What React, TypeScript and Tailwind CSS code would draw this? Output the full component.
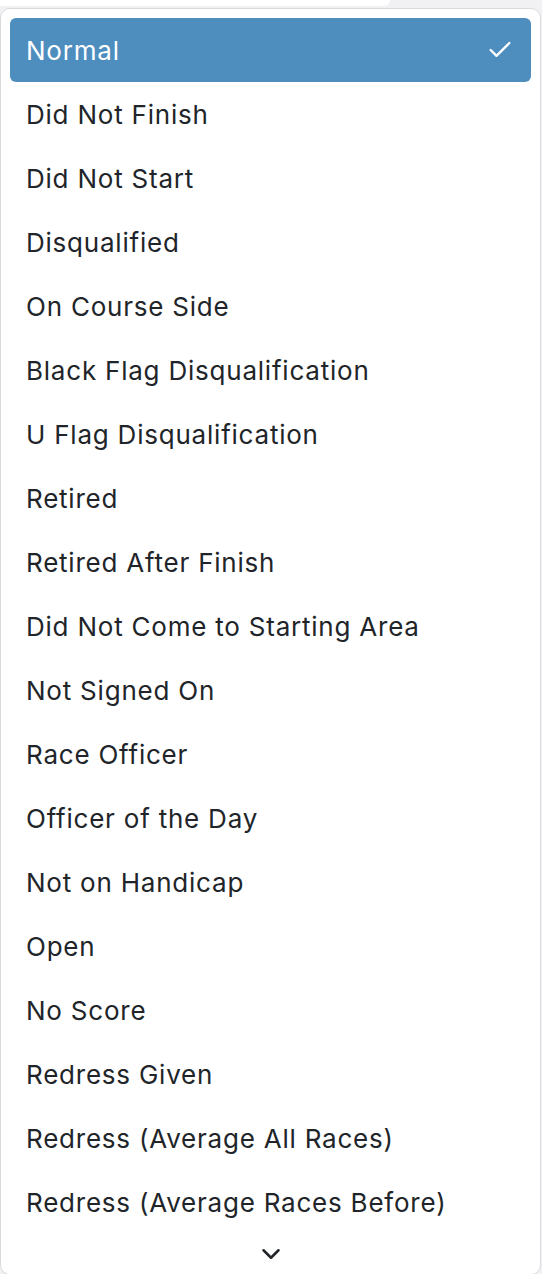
import React from "react";
import { Check, ChevronDown } from "lucide-react";

const OPTIONS = [
  "Normal",
  "Did Not Finish",
  "Did Not Start",
  "Disqualified",
  "On Course Side",
  "Black Flag Disqualification",
  "U Flag Disqualification",
  "Retired",
  "Retired After Finish",
  "Did Not Come to Starting Area",
  "Not Signed On",
  "Race Officer",
  "Officer of the Day",
  "Not on Handicap",
  "Open",
  "No Score",
  "Redress Given",
  "Redress (Average All Races)",
  "Redress (Average Races Before)",
];

function App() {
  const selected = "Normal";

  return (
    <div
      className="h-[1274px] overflow-hidden bg-[#f1f1f4] text-[#212529]"
      style={{ fontFamily: "Inter, 'Noto Sans', sans-serif" }}
    >
      <div className="h-[6px] w-[390px] rounded-br-md bg-white" />

      <div className="mt-[2px] w-[541px] rounded-[10px] border border-[#d9dadf] bg-white p-[9px] pb-0">
        {OPTIONS.map((label) => {
          const active = label === selected;
          return (
            <div
              key={label}
              className={
                active
                  ? "flex h-16 items-center justify-between rounded-md bg-[#4e8ebf] pl-4 pr-[17px] text-white"
                  : "flex h-16 items-center justify-between pl-4 pr-[17px]"
              }
            >
              <span className="pt-0.5 text-[26px] leading-none tracking-[0.03em]">
                {label}
              </span>
              {active && <Check size={28} strokeWidth={2} />}
            </div>
          );
        })}

        <div className="flex h-10 items-center justify-center">
          <ChevronDown size={30} strokeWidth={2} />
        </div>
      </div>
    </div>
  );
}

export default App;
